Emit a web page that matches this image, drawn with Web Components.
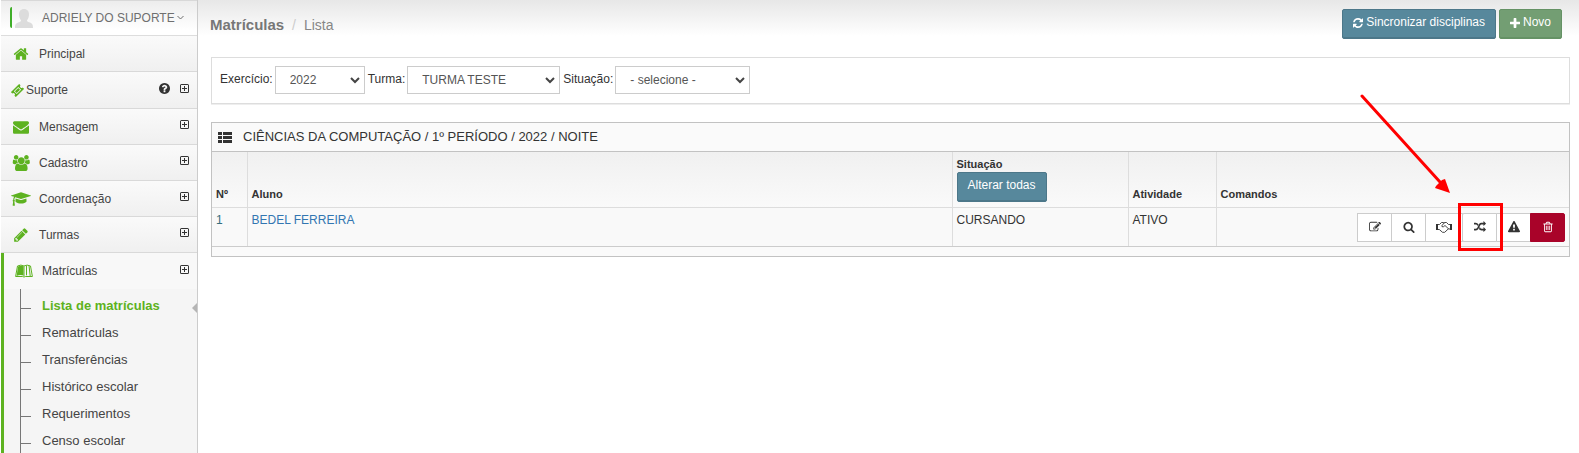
<!DOCTYPE html>
<html lang="pt-BR">
<head>
<meta charset="utf-8">
<meta name="viewport" content="width=device-width, initial-scale=1">
<title>Matrículas - Lista</title>
<style>
  html, body {
    margin: 0;
    height: 100%;
    background: #fff;
    color: #333;
    font: 12px/18px "Liberation Sans", Arial, sans-serif;
  }
</style>
</head>
<body>
<app-shell>
  <side-menu slot="menu" user="ADRIELY DO SUPORTE">
    <menu-item icon="home" plain>Principal</menu-item>
    <menu-item icon="ticket" compact help>Suporte</menu-item>
    <menu-item icon="envelope">Mensagem</menu-item>
    <menu-item icon="group">Cadastro</menu-item>
    <menu-item icon="cap">Coordenação</menu-item>
    <menu-item icon="pencil">Turmas</menu-item>
    <menu-item icon="book" open>Matrículas
      <sub-item slot="children" active>Lista de matrículas</sub-item>
      <sub-item slot="children">Rematrículas</sub-item>
      <sub-item slot="children">Transferências</sub-item>
      <sub-item slot="children">Histórico escolar</sub-item>
      <sub-item slot="children">Requerimentos</sub-item>
      <sub-item slot="children">Censo escolar</sub-item>
    </menu-item>
  </side-menu>

  <page-header section="Matrículas" page="Lista">
    <action-button icon="refresh">Sincronizar disciplinas</action-button>
    <action-button icon="plus" kind="success">Novo</action-button>
  </page-header>
  <filter-bar></filter-bar>
  <enrollment-panel>CIÊNCIAS DA COMPUTAÇÃO / 1º PERÍODO / 2022 / NOITE</enrollment-panel>
</app-shell>

<script>
const ICONS = {
  home: ['0 0 1792 1792', '<path d="M1472 992v480q0 26-19 45t-45 19h-384v-384h-256v384h-384q-26 0-45-19t-19-45v-480q0-1 .5-3t.5-3l575-474 575 474q1 2 1 6zm223-69l-62 74q-8 9-21 11h-3q-13 0-21-7l-692-577-692 577q-12 8-24 7-13-2-21-11l-62-74q-8-10-7-23.5t11-21.5l719-599q32-26 76-26t76 26l244 204v-195q0-14 9-23t23-9h192q14 0 23 9t9 23v408l219 182q10 8 11 21.5t-7 23.5z"/>'],
  ticket: ['0 0 1792 1792', '<g transform="rotate(-45 896 896)"><path fill-rule="evenodd" d="M96 420h1600v270a206 206 0 0 0 0 412v270h-1600v-270a206 206 0 0 0 0-412zM470 620v552h852v-552z"/><path d="M570 720h652v352h-652z"/></g>'],
  envelope: ['0 0 1792 1792', '<path d="M1792 710v794q0 66-47 113t-113 47h-1472q-66 0-113-47t-47-113v-794q44 49 101 87 362 246 497 345 57 42 92.5 65.5t94.5 48 110 24.5h2q51 0 110-24.5t94.5-48 92.5-65.5q170-123 498-345 57-39 100-87zm0-294q0 79-49 151t-122 123q-376 261-468 325-10 7-42.5 31t-54 38.5-52 32.5-57.5 27-50 9h-2q-23 0-50-9t-57.5-27-52-32.5-54-38.5-42.5-31q-91-64-262-182.5t-205-142.5q-62-42-117-115.5t-55-136.5q0-78 41.5-130t118.5-52h1472q65 0 112.5 47t47.5 113z"/>'],
  group: ['0 0 1984 1792', '<path d="M657 896q-162 5-265 128h-134q-82 0-138-40.5t-56-118.5q0-353 124-353 6 0 43.5 21t97.5 42.5 119 21.5q67 0 133-23-5 37-5 66 0 139 81 256zm1071 637q0 120-73 189.5t-194 69.5h-874q-121 0-194-69.5t-73-189.5q0-53 3.5-103.5t14-109 26.5-108.5 43-97.5 62-81 85.5-53.5 111.5-20q10 0 43 21.5t73 48 107 48 135 21.5 135-21.5 107-48 73-48 43-21.5q61 0 111.5 20t85.5 53.5 62 81 43 97.5 26.5 108.5 14 109 3.5 103.5zm-1024-1277q0 106-75 181t-181 75-181-75-75-181 75-181 181-75 181 75 75 181zm704 384q0 159-112.5 271.5t-271.5 112.5-271.5-112.5-112.5-271.5 112.5-271.5 271.5-112.5 271.5 112.5 112.5 271.5zm576 225q0 78-56 118.5t-138 40.5h-134q-103-123-265-128 81-117 81-256 0-29-5-66 66 23 133 23 59 0 119-21.5t97.5-42.5 43.5-21q124 0 124 353zm-128-609q0 106-75 181t-181 75-181-75-75-181 75-181 181-75 181 75 75 181z"/>'],
  cap: ['0 0 2304 1792', '<path d="M1774 836l18 316q4 69-82 128t-235 93.500-323 34.500-323-34.500-235-93.500-82-128l18-316 574 181q22 7 48 7t48-7zm530-324q0 23-22 31l-1120 352q-4 1-10 1t-10-1l-652-206q-43 34-71 111.500t-34 178.500q63 36 63 109 0 69-58 107l58 433q2 14-8 25-9 11-24 11h-192q-15 0-24-11-10-11-8-25l58-433q-58-38-58-107 0-73 65-111 11-207 98-330l-333-104q-22-8-22-31t22-31l1120-352q4-1 10-1t10 1l1120 352q22 8 22 31z"/>'],
  pencil: ['0 0 1792 1792', '<path d="M491 1536l91-91-235-235-91 91v107h128v128h107zm523-928q0-22-22-22-10 0-17 7l-542 542q-7 7-7 17 0 22 22 22 10 0 17-7l542-542q7-7 7-17zm-54-192l416 416-832 832h-416v-416zm683 96q0 53-37 90l-166 166-416-416 166-165q36-38 90-38 53 0 91 38l235 234q37 39 37 91z"/>'],
  book: ['0 0 18 14', '<path d="M3 2.500Q6 1 8.500 2.300V11.500Q5 10.500 1.600 12z"/><path d="M2.500 2Q6 .200 9 2 12 .200 15.500 2L17.400 12.500H10.500Q9 13.500 7.500 12.500H.600zM9 2.200V12M11.500 1.700V11.300M14 1.500L15.200 12" fill="none" stroke="currentColor"/>'],
  plusbox: ['0 0 9 9', '<path fill-rule="evenodd" d="M1.500 0h6A1.500 1.500 0 0 1 9 1.500v6A1.500 1.500 0 0 1 7.500 9h-6A1.500 1.500 0 0 1 0 7.500v-6A1.500 1.500 0 0 1 1.500 0zM1 1v7h7V1z"/><path d="M4 2h1v2h2v1H5v2H4V5H2V4h2z"/>'],
  question: ['128 128 1536 1536', '<path d="M1024 1376v-192q0-14-9-23t-23-9h-192q-14 0-23 9t-9 23v192q0 14 9 23t23 9h192q14 0 23-9t9-23zm256-672q0-88-55.500-163t-138.500-116-170-41q-243 0-371 213-15 24 8 42l132 100q7 6 19 6 16 0 25-12 53-68 86-92 34-24 86-24 48 0 85.500 26t37.500 59q0 38-20 61t-68 45q-63 28-115.500 86.500t-52.500 125.500v36q0 14 9 23t23 9h192q14 0 23-9t9-23q0-19 21.500-49.500t54.500-49.500q32-18 49-28.500t46-35 44.500-48 28-60.500 12.500-81zm384 192q0 209-103 385.500t-279.500 279.500-385.500 103-385.500-103-279.500-279.500-103-385.500 103-385.500 279.500-279.500 385.500-103 385.500 103 279.500 279.500 103 385.500z"/>'],
  chevron: ['0 0 7 5', '<path d="M.5 1l3 3 3-3" fill="none" stroke="currentColor"/>'],
  avatar: ['0 0 18 19', '<path d="M9 0c3.300 0 5 2.300 5 5.500 0 2.500-1 4.500-2 5.800 0 1 .5 1.500 2 2 3 .9 4 1.700 4 5.700H0c0-4 1-4.800 4-5.700 1.500-.5 2-1 2-2C5 10 4 8 4 5.500 4 2.300 5.700 0 9 0z"/>'],
  refresh: ['128 128 1536 1536', '<path d="M1639 1056q0 5-1 7-64 268-268 434.500t-478 166.500q-146 0-282.500-55t-243.500-157l-129 129q-19 19-45 19t-45-19-19-45v-448q0-26 19-45t45-19h448q26 0 45 19t19 45-19 45l-137 137q71 66 161 102t187 36q134 0 250-65t186-179q11-17 53-117 8-23 30-23h192q13 0 22.500 9.500t9.500 22.500zm25-800v448q0 26-19 45t-45 19h-448q-26 0-45-19t-19-45 19-45l138-138q-148-137-349-137-134 0-250 65t-186 179q-11 17-53 117-8 23-30 23h-199q-13 0-22.500-9.500t-9.500-22.500v-7q65-268 270-434.500t480-166.500q146 0 284 55.500t245 156.500l130-129q19-19 45-19t45 19 19 45z"/>'],
  plus: ['192 128 1408 1408', '<path d="M1600 736v192q0 40-28 68t-68 28h-416v416q0 40-28 68t-68 28h-192q-40 0-68-28t-28-68v-416h-416q-40 0-68-28t-28-68v-192q0-40 28-68t68-28h416v-416q0-40 28-68t68-28h192q40 0 68 28t28 68v416h416q40 0 68 28t28 68z"/>'],
  list: ['0 0 14 11', '<path d="M0 0h4v3H0zM5 0h9v3H5zM0 4h4v3H0zM5 4h9v3H5zM0 8h4v3H0zM5 8h9v3H5z"/>'],
  edit: ['0 0 1792 1792', '<path d="M888 1184l116-116-152-152-116 116v56h96v96h56zm440-720q-16-16-33 1l-350 350q-17 17-1 33t33-1l350-350q17-17 1-33zm80 594v190q0 119-84.500 203.500t-203.500 84.500h-832q-119 0-203.500-84.500t-84.500-203.500v-832q0-119 84.500-203.500t203.500-84.500h832q63 0 117 25 15 7 18 23 3 17-9 29l-49 49q-14 14-32 8-23-6-45-6h-832q-66 0-113 47t-47 113v832q0 66 47 113t113 47h832q66 0 113-47t47-113v-126q0-13 9-22l64-64q15-15 35-7t20 29zm-96-738l288 288-672 672h-288v-288zm444 132l-92 92-288-288 92-92q28-28 68-28t68 28l152 152q28 28 28 68t-28 68z"/>'],
  search: ['0 0 1792 1792', '<path d="M1216 832q0-185-131.500-316.500t-316.500-131.500-316.500 131.500-131.500 316.500 131.500 316.500 316.500 131.500 316.500-131.500 131.500-316.500zm512 832q0 52-38 90t-90 38q-54 0-90-38l-343-342q-179 124-399 124-143 0-273.500-55.500t-225-150-150-225-55.500-273.500 55.500-273.500 150-225 225-150 273.500-55.500 273.500 55.500 225 150 150 225 55.500 273.500q0 220-124 399l343 343q37 37 37 90z"/>'],
  handshake: ['0 0 16 12', '<path d="M0 3h2v6H0zM14 3h2v6h-2z"/><path d="M2 3.500h1.500L5.500 1.500h2l1 .500M2 8.500h1.300L6.500 11.300h2.200l4-3.800M14 3.500h-1.500L10.500 1.500H8.500L6 4.500v1.200h1.500L9 4.500l3.700 3.500H14" fill="none" stroke="currentColor" stroke-width=".9"/>'],
  random: ['0 0 1792 1792', '<path d="M666 481q-60 92-137 273-22-45-37-72.500t-40.500-63.500-51-56.500-63-35-81.500-14.500h-224q-14 0-23-9t-9-23v-192q0-14 9-23t23-9h224q250 0 410 225zm1126 799q0 14-9 23l-320 320q-9 9-23 9-13 0-22.500-9.500t-9.500-22.500v-192q-32 0-85 .5t-81 1-73-1-71-5-64-10.500-63-18.500-58-28.500-59-40-55-53.500-56-69.500q59-93 136-273 22 45 37 72.500t40.500 63.500 51 56.500 63 35 81.500 14.500h256v-192q0-14 9-23t23-9q12 0 24 10l319 319q9 9 9 23zm0-896q0 14-9 23l-320 320q-9 9-23 9-13 0-22.500-9.500t-9.500-22.500v-192h-256q-48 0-87 15t-69 45-51 61.500-45 77.500q-32 62-78 171-29 66-49.500 111t-54 105-64 100-74 83-90 68.500-106.500 42-128 16.500h-224q-14 0-23-9t-9-23v-192q0-14 9-23t23-9h224q48 0 87-15t69-45 51-61.500 45-77.500q32-62 78-171 29-66 49.500-111t54-105 64-100 74-83 90-68.500 106.500-42 128-16.500h256v-192q0-14 9-23t23-9q12 0 24 10l319 319q9 9 9 23z"/>'],
  warning: ['0 0 1792 1792', '<path d="M1024 1375v-190q0-14-9.500-23.500t-22.500-9.500h-192q-13 0-22.500 9.500t-9.500 23.500v190q0 14 9.500 23.500t22.500 9.500h192q13 0 22.500-9.500t9.500-23.500zm-2-374l18-459q0-12-10-19-13-11-24-11h-220q-11 0-24 11-10 7-10 21l17 457q0 10 10 16.500t24 6.500h185q14 0 23.500-6.500t10.500-16.500zm-14-934l768 1408q35 63-2 126-17 29-46.500 46t-63.500 17h-1536q-34 0-63.500-17t-46.500-46q-37-63-2-126l768-1408q17-31 47-49t65-18 65 18 47 49z"/>'],
  trash: ['0 0 1792 1792', '<path d="M704 736v576q0 14-9 23t-23 9h-64q-14 0-23-9t-9-23v-576q0-14 9-23t23-9h64q14 0 23 9t9 23zm256 0v576q0 14-9 23t-23 9h-64q-14 0-23-9t-9-23v-576q0-14 9-23t23-9h64q14 0 23 9t9 23zm256 0v576q0 14-9 23t-23 9h-64q-14 0-23-9t-9-23v-576q0-14 9-23t23-9h64q14 0 23 9t9 23zm128 724v-948h-896v948q0 22 7 40.500t14.500 27 10.500 8.500h832q3 0 10.500-8.500t14.500-27 7-40.500zm-672-1076h448l-48-117q-7-9-17-11h-317q-10 2-17 11zm928 32v64q0 14-9 23t-23 9h-96v948q0 83-47 143.500t-113 60.500h-832q-66 0-113-58.500t-47-141.500v-952h-96q-14 0-23-9t-9-23v-64q0-14 9-23t23-9h309l70-167q15-37 54-63t79-26h320q40 0 79 26t54 63l70 167h309q14 0 23 9t9 23z"/>']
};

class AppIcon extends HTMLElement {
  constructor() {
    super();
    this.attachShadow({ mode: 'open' });
  }

  connectedCallback() {
    const [box, shape] = ICONS[this.getAttribute('name')];
    const [, , w, h] = box.split(' ').map(Number);
    const width = Number(this.getAttribute('size') || 14);
    this.shadowRoot.innerHTML = `
      <style>
        :host { display: inline-flex; flex: none; }
        svg { display: block; fill: currentColor; }
      </style>
      <svg viewBox="${box}" width="${width}" height="${Math.round(width * h / w)}" aria-hidden="true">${shape}</svg>
    `;
  }
}

class AppShell extends HTMLElement {
  constructor() {
    super();
    this.attachShadow({ mode: 'open' }).innerHTML = `
      <style>
        :host {
          display: grid;
          grid-template-columns: 198px minmax(0, 1fr);
          grid-template-rows: minmax(0, 1fr);
          height: 100vh;
        }

        main {
          padding: 0 9px 0 13px;
          background: linear-gradient(#e7e7e7, #fff 36px);
        }
      </style>
      <slot name="menu"></slot>
      <main><slot></slot></main>
    `;
  }
}

class SideMenu extends HTMLElement {
  constructor() {
    super();
    this.attachShadow({ mode: 'open' }).innerHTML = `
      <style>
        :host {
          display: block;
          box-sizing: border-box;
          overflow: hidden;
          border-left: 1px solid #fff;
          border-right: 1px solid #ccc;
          background: #f5f5f5;
        }

        .user {
          box-sizing: border-box;
          display: flex;
          align-items: center;
          height: 36px;
          padding-left: 9px;
          border-bottom: 1px solid #ddd;
          background: linear-gradient(#ececec, #fff 30px);
          box-shadow: inset 0 1px #d8d8d8;
          color: #6f6f6f;
          text-decoration: none;
        }

        .photo {
          display: flex;
          align-items: flex-end;
          height: 21px;
          padding-left: 3px;
          margin-right: 9px;
          border-left: 2px solid #3fae29;
          border-radius: 2px 0 0 2px;
          color: #dcdcdc;
        }

        .name { margin-right: 2px; }
      </style>
      <a class="user" href="#">
        <span class="photo"><app-icon name="avatar" size="18"></app-icon></span>
        <span class="name"></span>
        <app-icon name="chevron" size="7"></app-icon>
      </a>
      <nav><slot></slot></nav>
    `;
  }

  connectedCallback() {
    this.shadowRoot.querySelector('.name').textContent = this.getAttribute('user');
  }
}

class MenuItem extends HTMLElement {
  constructor() {
    super();
    this.attachShadow({ mode: 'open' });
  }

  connectedCallback() {
    const sizes = { home: 16, ticket: 13, envelope: 16, group: 18, cap: 20, pencil: 16, book: 18 };
    const icon = this.getAttribute('icon');
    this.shadowRoot.innerHTML = `
      <style>
        :host { display: block; color: #444; }
        :host([open]) { border-left: 3px solid #5db220; }

        .row {
          box-sizing: border-box;
          display: flex;
          align-items: center;
          height: 36px;
          padding: 0 8px 0 10px;
          border-bottom: 1px solid #d9d9d9;
          background: linear-gradient(#fafafa, #f0f0f0);
          color: inherit;
          text-decoration: none;
        }

        :host([compact]) .row { height: 37px; padding-left: 9px; }

        :host([open]) .row {
          border-bottom: 0;
          background: #f8f8f8;
        }

        .icon {
          display: flex;
          justify-content: center;
          width: 20px;
          margin-right: 8px;
          color: #5db220;
        }

        :host([compact]) .icon { width: 14px; margin-right: 2px; }

        .label { flex: 1; }
        .tail { display: flex; align-items: center; gap: 10px; padding-bottom: 4px; color: #333; }
        .children { display: none; }

        :host([open]) .children {
          display: block;
          padding-top: 3px;
          margin-left: 16px;
          border-left: 1px solid #777;
        }
      </style>
      <a class="row" href="#">
        <span class="icon"><app-icon name="${icon}" size="${sizes[icon]}"></app-icon></span>
        <span class="label"><slot></slot></span>
        <span class="tail">
          ${this.hasAttribute('help') ? '<app-icon name="question" size="11"></app-icon>' : ''}
          ${this.hasAttribute('plain') ? '' : '<app-icon name="plusbox" size="9"></app-icon>'}
        </span>
      </a>
      <div class="children"><slot name="children"></slot></div>
    `;
  }
}

class SubItem extends HTMLElement {
  constructor() {
    super();
    this.attachShadow({ mode: 'open' }).innerHTML = `
      <style>
        :host {
          display: block;
          position: relative;
          font-size: 13px;
          line-height: 27px;
        }

        a {
          display: flex;
          align-items: center;
          gap: 11px;
          color: inherit;
          text-decoration: none;
        }

        a::before {
          content: "";
          width: 10px;
          margin-top: 5px;
          border-top: 1px solid #777;
        }

        :host([active]) { color: #5db220; font-weight: bold; }

        :host([active])::after {
          content: "";
          position: absolute;
          right: 0;
          top: 11px;
          border: 5px solid transparent;
          border-left-width: 0;
          border-right-color: #b5b5b5;
        }
      </style>
      <a href="#"><slot></slot></a>
    `;
  }
}

class ActionButton extends HTMLElement {
  constructor() {
    super();
    this.attachShadow({ mode: 'open' });
  }

  connectedCallback() {
    const icon = this.getAttribute('icon');
    this.shadowRoot.innerHTML = `
      <style>
        :host { display: inline-block; }

        button {
          display: flex;
          align-items: center;
          gap: 3px;
          padding: 4px 10px 7px;
          border: 1px solid #4c7789;
          border-radius: 2px;
          background: #57889c;
          box-shadow: inset 0 -1px #4c7789;
          color: #fff;
          font: inherit;
          line-height: 17px;
          cursor: pointer;
        }

        :host([kind="success"]) button {
          border-color: #659265;
          background: #739e73;
          box-shadow: inset 0 -1px #659265;
        }
      </style>
      <button type="button">
        ${icon ? `<app-icon name="${icon}" size="10"></app-icon>` : ''}
        <span><slot></slot></span>
      </button>
    `;
  }
}

class PageHeader extends HTMLElement {
  constructor() {
    super();
    this.attachShadow({ mode: 'open' }).innerHTML = `
      <style>
        :host {
          display: flex;
          justify-content: space-between;
          align-items: flex-start;
          padding: 9px 8px 18px 0;
        }

        h1 {
          margin: 0 0 0 -1px;
          color: #868686;
          font-size: 14px;
          line-height: 32px;
          font-weight: normal;
          height: 30px;
        }

        b { color: #777; font-size: 15px; }
        i { margin: 0 4px; color: #ccc; font-style: normal; }
        .actions { display: flex; gap: 3px; }
      </style>
      <h1><b></b> <i>/</i> <span></span></h1>
      <div class="actions"><slot></slot></div>
    `;
  }

  connectedCallback() {
    this.shadowRoot.querySelector('b').textContent = this.getAttribute('section');
    this.shadowRoot.querySelector('h1 span').textContent = this.getAttribute('page');
  }
}

class FilterBar extends HTMLElement {
  constructor() {
    super();
    this.attachShadow({ mode: 'open' }).innerHTML = `
      <style>
        :host { display: block; }

        form {
          display: flex;
          align-items: center;
          gap: 2px;
          padding: 8px 8px 9px;
          margin: 0 0 18px;
          border: 1px solid #ddd;
          box-shadow: 0 1px #eee;
          background: #fff;
        }

        label { line-height: 26px; padding-bottom: 2px; }

        .select {
          display: grid;
          align-items: center;
          margin-right: 1px;
        }

        .select > * { grid-area: 1 / 1; }

        select {
          appearance: none;
          height: 28px;
          padding: 0 14px;
          border: 1px solid #ccc;
          border-radius: 0;
          background: #fff;
          color: #555;
          font: inherit;
        }

        .select svg {
          justify-self: end;
          margin-right: 5px;
          pointer-events: none;
        }

        #year { width: 90px; }
        #group { width: 153px; }
        #status { width: 135px; }
      </style>
      <form>
        <label for="year">Exercício:</label>
        <span class="select"><select id="year"><option>2022</option></select>${this.arrow()}</span>
        <label for="group">Turma:</label>
        <span class="select"><select id="group"><option>TURMA TESTE</option></select>${this.arrow()}</span>
        <label for="status">Situação:</label>
        <span class="select"><select id="status"><option>- selecione -</option></select>${this.arrow()}</span>
      </form>
    `;
  }

  arrow() {
    return '<svg width="10" height="7" viewBox="0 0 10 7" aria-hidden="true"><path d="M1 1l4 4 4-4" fill="none" stroke="#444" stroke-width="2"/></svg>';
  }
}

class CommandGroup extends HTMLElement {
  constructor() {
    super();
    this.attachShadow({ mode: 'open' }).innerHTML = `
      <style>
        :host { display: flex; justify-content: flex-end; }

        button {
          display: flex;
          align-items: center;
          justify-content: center;
          width: 35px;
          height: 29px;
          padding: 0 0 2px;
          margin-left: -1px;
          border: 1px solid #ccc;
          background: #fff;
          color: #333;
          cursor: pointer;
        }

        button:first-child { border-radius: 2px 0 0 2px; }
        .wide { width: 38px; }

        .danger {
          border-color: #a90329;
          border-radius: 0 2px 2px 0;
          background: #a90329;
          color: #fff;
        }

        .marked { position: relative; z-index: 1; }
        .marked button { margin-left: 0; }
        .wide { margin-right: -1px; }

        .frame {
          position: absolute;
          inset: -10px -6px -9px -4px;
          border: 3px solid #f00;
          pointer-events: none;
        }

        .arrow {
          position: absolute;
          right: 47px;
          bottom: 49px;
          pointer-events: none;
        }
      </style>
      <button type="button" aria-label="Editar"><app-icon name="edit" size="12"></app-icon></button>
      <button type="button" aria-label="Visualizar"><app-icon name="search" size="12"></app-icon></button>
      <button type="button" class="wide" aria-label="Acordo"><app-icon name="handshake" size="16"></app-icon></button>
      <span class="marked">
        <button type="button" aria-label="Transferir"><app-icon name="random" size="12"></app-icon></button>
        <span class="frame"></span>
        <svg class="arrow" width="90" height="100" viewBox="0 0 90 100" aria-hidden="true">
          <path d="M2 3l78 86" stroke="#f00" stroke-width="3" stroke-linecap="round"/>
          <path d="M90 100L85 86l-3 1-6 6-1 2z" fill="#f00"/>
        </svg>
      </span>
      <button type="button" aria-label="Ocorrência"><app-icon name="warning" size="12"></app-icon></button>
      <button type="button" class="danger" aria-label="Excluir"><app-icon name="trash" size="12"></app-icon></button>
    `;
  }
}

class EnrollmentPanel extends HTMLElement {
  constructor() {
    super();
    this.attachShadow({ mode: 'open' }).innerHTML = `
      <style>
        :host {
          display: block;
          border: 1px solid #c2c2c2;
          background: #fafafa;
        }

        header {
          display: flex;
          align-items: center;
          height: 28px;
          padding-left: 6px;
          border-bottom: 1px solid #c2c2c2;
        }

        h2 {
          margin: 0 0 0 11px;
          font-size: 13px;
          font-weight: normal;
        }

        table {
          width: 100%;
          border-collapse: collapse;
          table-layout: fixed;
          background: #f9f9f9;
        }

        th, td {
          box-sizing: border-box;
          padding: 5px;
          border-left: 1px solid #ddd;
          border-bottom: 1px solid #ddd;
          text-align: left;
          line-height: 16px;
        }

        .n { width: 35px; }
        .status { width: 176px; }
        .activity { width: 88px; }
        .commands { width: 353px; }

        thead { background: linear-gradient(#f0f0f0, #fafafa); }
        th { padding-top: 4px; padding-left: 4px; font-size: 11px; vertical-align: bottom; }
        td { padding: 5px 4px 4px; line-height: 14px; vertical-align: top; }
        th:first-child, td:first-child { border-left: 0; }
        tbody td { border-bottom-color: #ccc; }
        td:first-child { color: #356e7c; }
        a { color: #3276b1; text-decoration: none; }
        action-button { display: block; font-size: 12px; font-weight: normal; }
        footer { height: 9px; }
      </style>
      <header>
        <app-icon name="list" size="14"></app-icon>
        <h2><slot></slot></h2>
      </header>
      <table>
        <thead>
          <tr>
            <th class="n">Nº</th>
            <th>Aluno</th>
            <th class="status">Situação<action-button>Alterar todas</action-button></th>
            <th class="activity">Atividade</th>
            <th class="commands">Comandos</th>
          </tr>
        </thead>
        <tbody>
          <tr>
            <td>1</td>
            <td><a href="#">BEDEL FERREIRA</a></td>
            <td>CURSANDO</td>
            <td>ATIVO</td>
            <td><command-group></command-group></td>
          </tr>
        </tbody>
      </table>
      <footer></footer>
    `;
  }
}

customElements.define('app-icon', AppIcon);
customElements.define('app-shell', AppShell);
customElements.define('side-menu', SideMenu);
customElements.define('menu-item', MenuItem);
customElements.define('sub-item', SubItem);
customElements.define('action-button', ActionButton);
customElements.define('page-header', PageHeader);
customElements.define('filter-bar', FilterBar);
customElements.define('command-group', CommandGroup);
customElements.define('enrollment-panel', EnrollmentPanel);
</script>
</body>
</html>
